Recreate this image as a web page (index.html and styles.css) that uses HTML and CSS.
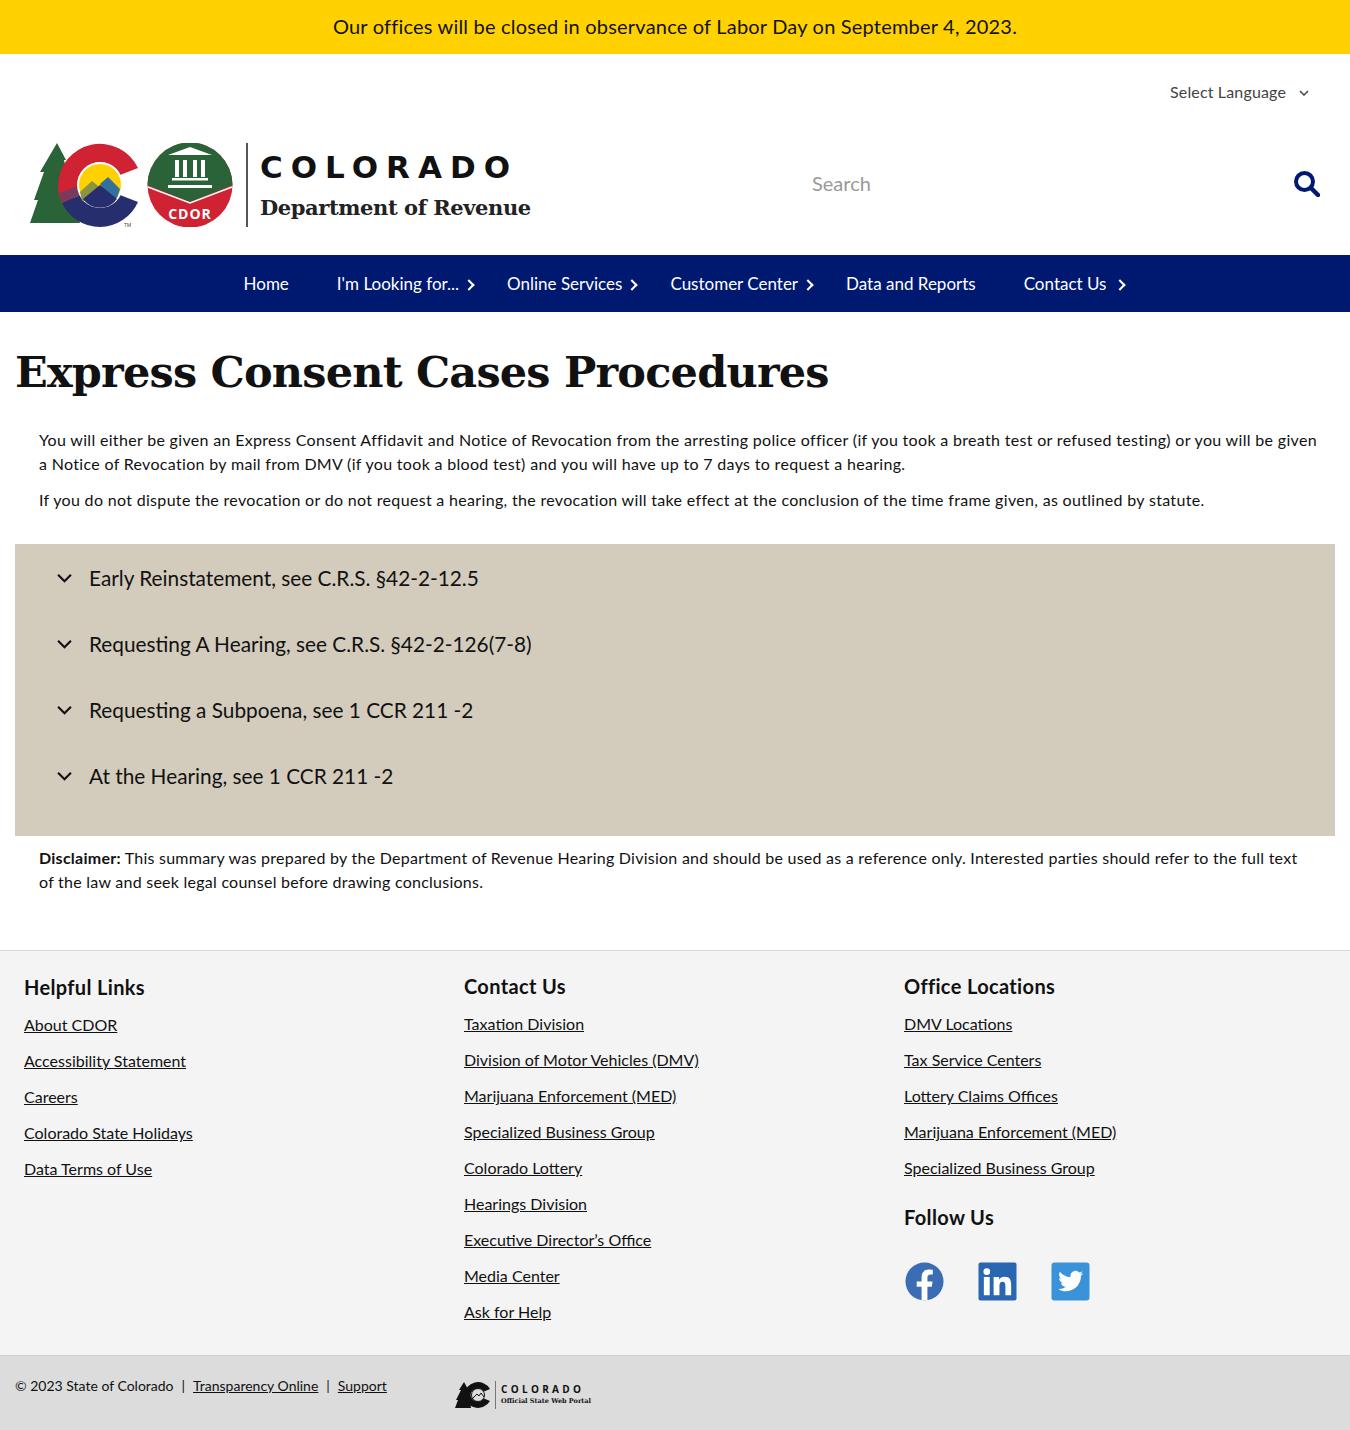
FILE: index.html
```html
<!DOCTYPE html>
<html lang="en">
<head>
    <meta charset="UTF-8">
    <meta name="viewport" content="width=device-width, initial-scale=1.0">
    <title>Express Consent Cases Procedures</title>
    <link rel="stylesheet" href="styles.css">
</head>
<body>
    <div class="alerta">Our offices will be closed in observance of Labor Day on September 4, 2023.</div>

    <div class="idioma">
        <span>Select Language</span>
        <svg class="idioma-seta" viewBox="0 0 10 6"><path d="M1 1l4 4 4-4" fill="none" stroke="#444" stroke-width="1.5"/></svg>
    </div>

    <header class="topo">
        <div class="marca">
            <svg class="marca-logo" viewBox="30 143 203 84">
                <!-- arvore -->
                <path d="M57 143L66 160H64L70 185L80 223H30L38 200H34L44 172H40z" fill="#2a6337"/>
                <!-- C -->
                <path d="M138 168A42 42 0 0 0 58 185A42 42 0 0 0 62 203L80 195A22 22 0 0 1 78 185A22 22 0 0 1 120 175z" fill="#cf2232"/>
                <path d="M62 203A42 42 0 0 0 100 227A42 42 0 0 0 138 202L120 195A22 22 0 0 1 100 207A22 22 0 0 1 80 195z" fill="#262e6e"/>
                <path d="M62 203L80 195Q78 190 78 186L60 193Q60 198 62 203z" fill="#7a3a5c"/>
                <circle cx="100" cy="185" r="23" fill="#fff"/>
                <circle cx="100" cy="185" r="21" fill="#ffd100"/>
                <path d="M80 192L92 181L97 185L101 190L88 201H82z" fill="#8a9544"/>
                <path d="M100 184L108 177L120 189L117 198H110z" fill="#33709e"/>
                <path d="M83 199L100 185L117 199A21 21 0 0 1 83 199z" fill="#262e6e"/>
                <text class="marca-tm" x="124" y="227">TM</text>
                <!-- selo -->
                <circle cx="190" cy="185" r="42.500" fill="#cf2232"/>
                <path d="M147.500 185A42.500 42.500 0 0 1 232.500 185L190 202z" fill="#2a6337"/>
                <path d="M148 187l42 16 42-16" fill="none" stroke="#fff" stroke-width="1.500"/>
                <path d="M168 155l22-8 22 8z" fill="#fff"/>
                <path d="M175 160h4v17h-4zM183 160h4v17h-4zM193 160h4v17h-4zM201 160h4v17h-4z" fill="#fff"/>
                <path d="M172 178h36v2.500h-36zM168 185h44v3h-44z" fill="#fff"/>
                <text class="marca-cdor" x="190" y="219">CDOR</text>
            </svg>
            <div class="marca-divisor"></div>
            <div class="marca-texto">
                <div class="marca-estado">COLORADO</div>
                <div class="marca-depto">Department of Revenue</div>
            </div>
        </div>
        <div class="busca">
            <span class="busca-texto">Search</span>
            <svg class="busca-icone" viewBox="0 0 26 26"><circle cx="10.500" cy="10.500" r="8.500" fill="none" stroke="#001970" stroke-width="4"/><path d="M17 17l7 7" stroke="#001970" stroke-width="4.500" stroke-linecap="round"/></svg>
        </div>
    </header>

    <nav class="menu">
        <a class="menu-item">Home</a>
        <a class="menu-item com-seta">I'm Looking for...</a>
        <a class="menu-item com-seta">Online Services</a>
        <a class="menu-item com-seta">Customer Center</a>
        <a class="menu-item">Data and Reports</a>
        <a class="menu-item com-seta seta-fora">Contact Us</a>
    </nav>

    <main class="conteudo">
        <h1>Express Consent Cases Procedures</h1>
        <div class="texto">
            <p>You will either be given an Express Consent Affidavit and Notice of Revocation from the arresting police officer (if you took a breath test or refused testing) or you will be given a Notice of Revocation by mail from DMV (if you took a blood test) and you will have up to 7 days to request a hearing.</p>
            <p>If you do not dispute the revocation or do not request a hearing, the revocation will take effect at the conclusion of the time frame given, as outlined by statute.</p>
        </div>
        <div class="sanfona">
            <div class="sanfona-item"><svg viewBox="0 0 14 9"><path d="M1 1.500l6 6 6-6" fill="none" stroke="#111" stroke-width="2"/></svg>Early Reinstatement, see C.R.S. §42-2-12.5</div>
            <div class="sanfona-item"><svg viewBox="0 0 14 9"><path d="M1 1.500l6 6 6-6" fill="none" stroke="#111" stroke-width="2"/></svg>Requesting A Hearing, see C.R.S. §42-2-126(7-8)</div>
            <div class="sanfona-item"><svg viewBox="0 0 14 9"><path d="M1 1.500l6 6 6-6" fill="none" stroke="#111" stroke-width="2"/></svg>Requesting a Subpoena, see 1 CCR 211 -2</div>
            <div class="sanfona-item"><svg viewBox="0 0 14 9"><path d="M1 1.500l6 6 6-6" fill="none" stroke="#111" stroke-width="2"/></svg>At the Hearing, see 1 CCR 211 -2</div>
        </div>
        <p class="aviso"><b>Disclaimer:</b> This summary was prepared by the Department of Revenue Hearing Division and should be used as a reference only. Interested parties should refer to the full text of the law and seek legal counsel before drawing conclusions.</p>
    </main>

    <footer class="rodape">
        <div class="coluna coluna-primeira">
            <h3>Helpful Links</h3>
            <a>About CDOR</a>
            <a>Accessibility Statement</a>
            <a>Careers</a>
            <a>Colorado State Holidays</a>
            <a>Data Terms of Use</a>
        </div>
        <div class="coluna">
            <h3>Contact Us</h3>
            <a>Taxation Division</a>
            <a>Division of Motor Vehicles (DMV)</a>
            <a>Marijuana Enforcement (MED)</a>
            <a>Specialized Business Group</a>
            <a>Colorado Lottery</a>
            <a>Hearings Division</a>
            <a>Executive Director’s Office</a>
            <a>Media Center</a>
            <a>Ask for Help</a>
        </div>
        <div class="coluna">
            <h3>Office Locations</h3>
            <a>DMV Locations</a>
            <a>Tax Service Centers</a>
            <a>Lottery Claims Offices</a>
            <a>Marijuana Enforcement (MED)</a>
            <a>Specialized Business Group</a>
            <h3 class="titulo-social">Follow Us</h3>
            <div class="sociais">
                <svg viewBox="0 0 40 40"><circle cx="20" cy="20" r="19.500" fill="#3b6db4"/><path d="M17 39.500V25.500h-5V20h5v-4.500c0-5 3-7.700 7.500-7.700 2.100 0 4 .3 4 .3v4.700h-2.300c-2.400 0-3.200 1.500-3.200 3V20h5.300l-.9 5.500h-4.400v14z" fill="#fff"/></svg>
                <svg viewBox="0 0 40 40"><rect x=".5" y=".5" width="39" height="39" rx="2" fill="#2a67b2"/><path d="M6 15.500h6V34H6zM9 6.500a3.400 3.400 0 1 1 0 6.800 3.400 3.400 0 0 1 0-6.800zM16 15.500h5.600V18c1-1.700 3-3 5.800-3 5.500 0 6.600 3.600 6.600 8.400V34h-5.900v-9.500c0-2.400-.5-4.300-2.900-4.300-2.500 0-3.200 1.900-3.200 4.200V34h-6z" fill="#fff"/></svg>
                <svg viewBox="0 0 40 40"><rect x=".5" y=".5" width="39" height="39" rx="3" fill="#3a92d8"/><path d="M33 11.500c-1 .5-2 .8-3 .9 1.100-.7 1.900-1.700 2.300-2.900-1 .6-2.100 1-3.300 1.300a5.300 5.300 0 0 0-9 4.800c-4.400-.2-8.300-2.300-10.900-5.500-1.400 2.400-.7 5.500 1.600 7-.9 0-1.700-.3-2.400-.7 0 2.500 1.800 4.700 4.300 5.200-.8.200-1.600.2-2.400.1.700 2.100 2.600 3.600 4.900 3.700-2.200 1.700-5 2.500-7.800 2.200 2.400 1.500 5.200 2.400 8.200 2.400 9.900 0 15.500-8.400 15.200-15.900 1-.7 1.900-1.600 2.300-2.600z" fill="#fff"/></svg>
            </div>
        </div>
    </footer>

    <div class="base">
        <div class="base-links">© 2023 State of Colorado<span class="barra">|</span><a>Transparency Online</a><span class="barra">|</span><a>Support</a></div>
        <div class="portal">
            <svg class="portal-logo" viewBox="0 0 36 28">
                <path d="M9 1L14 10H13L16 27H0L3 19H1L6 9H4z" fill="#111"/>
                <path d="M35 8A14 14 0 0 0 9 14A14 14 0 0 0 35 20L29 17.500A7.500 7.500 0 0 1 15.500 14A7.500 7.500 0 0 1 29 10.500z" fill="#111"/>
                <circle cx="23" cy="14" r="6.500" fill="none" stroke="#111" stroke-width="1"/>
                <path d="M17 18l5-5 2 2 2-3 3 4" fill="none" stroke="#111" stroke-width="1"/>
            </svg>
            <div class="portal-divisor"></div>
            <div>
                <div class="portal-estado">COLORADO</div>
                <div class="portal-nome">Official State Web Portal</div>
            </div>
        </div>
    </div>
</body>
</html>
```
FILE: styles.css
```css
* {
    margin: 0;
    padding: 0;
    box-sizing: border-box;
}

body {
    font-family: "Lato", "Open Sans", sans-serif;
    font-size: 16px;
    color: #111;
    background: #fff;
}

.alerta {
    height: 54px;
    line-height: 52px;
    background: #ffd100;
    text-align: center;
    font-size: 20px;
    letter-spacing: 0.2px;
}

.idioma {
    height: 76px;
    padding: 27px 41px 0 0;
    display: flex;
    justify-content: flex-end;
    align-items: flex-start;
    gap: 13px;
    color: #444;
    line-height: 22px;
    letter-spacing: 0.15px;
}

.idioma-seta {
    width: 10px;
    height: 6px;
    margin-top: 9px;
}

.topo {
    height: 125px;
    padding: 13px 30px 0;
    display: flex;
    justify-content: space-between;
}

.marca {
    display: flex;
    height: 84px;
}

.marca-logo {
    width: 203px;
    height: 84px;
}

.marca-tm {
    font-family: "Liberation Sans", sans-serif;
    font-size: 5px;
    fill: #444;
}

.marca-cdor {
    font-family: "Open Sans", sans-serif;
    font-weight: 700;
    font-size: 14px;
    letter-spacing: 1px;
    text-anchor: middle;
    fill: #fff;
}

.marca-divisor {
    width: 2px;
    background: #555;
    margin: 0 12px 0 13px;
}

.marca-estado {
    font-family: "DejaVu Sans", sans-serif;
    font-weight: 700;
    font-size: 31px;
    line-height: 40px;
    letter-spacing: 8px;
    margin-top: 4px;
    color: #111;
}

.marca-depto {
    font-family: "DejaVu Serif", serif;
    font-weight: 700;
    font-size: 21px;
    line-height: 30px;
    letter-spacing: -0.4px;
    margin-top: 6px;
    color: #222;
}

.busca {
    width: 508px;
    height: 81px;
    display: flex;
    justify-content: space-between;
    align-items: center;
}

.busca-texto {
    font-size: 20px;
    color: #999;
    margin-bottom: 2px;
}

.busca-icone {
    width: 26px;
    height: 26px;
}

.menu {
    height: 57px;
    background: #001970;
    display: flex;
    justify-content: center;
    align-items: center;
}

.menu-item {
    position: relative;
    padding: 0 24px;
    color: #fff;
    font-size: 17px;
    line-height: 56px;
}

.com-seta::after {
    content: "";
    position: absolute;
    right: 10px;
    top: 25px;
    width: 6px;
    height: 6px;
    border-top: 2px solid #fff;
    border-right: 2px solid #fff;
    transform: rotate(45deg);
}

.seta-fora::after {
    right: 6px;
}

h1 {
    font-family: "DejaVu Serif", serif;
    font-weight: 700;
    font-size: 43px;
    line-height: 60px;
    letter-spacing: -0.8px;
    padding: 30px 0 0 15px;
    color: #111;
}

.texto {
    padding: 26px 32px 0 39px;
    line-height: 24px;
    letter-spacing: 0.32px;
}

.texto p {
    margin-bottom: 12px;
}

.sanfona {
    margin: 32px 15px 0;
    height: 292px;
    background: #d3ccbc;
    padding: 0 0 0 42px;
}

.sanfona-item {
    height: 66px;
    display: flex;
    align-items: center;
    gap: 17px;
    font-size: 20.8px;
}

.sanfona-item svg {
    width: 15px;
    height: 10px;
    margin-top: 2px;
}

.aviso {
    padding: 10px 39px 0;
    line-height: 24px;
    letter-spacing: 0.25px;
    height: 114px;
}

.rodape {
    height: 405px;
    background: #f4f4f4;
    border-top: 1px solid #d8d8d8;
    padding: 0 0 0 24px;
    display: grid;
    grid-template-columns: 440px 440px 1fr;
}

.coluna {
    padding-top: 21px;
    display: flex;
    flex-direction: column;
    align-items: flex-start;
}

.coluna-primeira {
    padding-top: 22px;
}

.coluna h3 {
    font-size: 20px;
    line-height: 28px;
    letter-spacing: 0.35px;
    margin-bottom: 13px;
}

.coluna a {
    line-height: 22px;
    margin-bottom: 14px;
    text-decoration: underline;
}

.coluna .titulo-social {
    margin-top: 10px;
    margin-bottom: 0;
}

.sociais {
    display: flex;
    gap: 34px;
    margin: 31px 0 0 1px;
}

.sociais svg {
    width: 39px;
    height: 39px;
}

.base {
    height: 76px;
    background: #dcdcdc;
    border-top: 1px solid #ccc;
    padding: 20px 0 0 15px;
    display: flex;
    font-size: 14px;
}

.base-links {
    width: 440px;
    line-height: 20px;
}

.base-links a {
    text-decoration: underline;
}

.barra {
    margin: 0 8px;
}

.portal {
    display: flex;
    height: 28px;
    margin-top: 5px;
}

.portal-logo {
    width: 36px;
    height: 28px;
}

.portal-divisor {
    width: 1px;
    background: #777;
    margin: 0 5px 0 4px;
}

.portal-estado {
    font-family: "Open Sans", sans-serif;
    font-weight: 700;
    font-size: 10px;
    letter-spacing: 3.3px;
    line-height: 13px;
    margin-top: 2px;
}

.portal-nome {
    font-family: "DejaVu Serif", serif;
    font-weight: 700;
    font-size: 6.5px;
    line-height: 10px;
}
```
